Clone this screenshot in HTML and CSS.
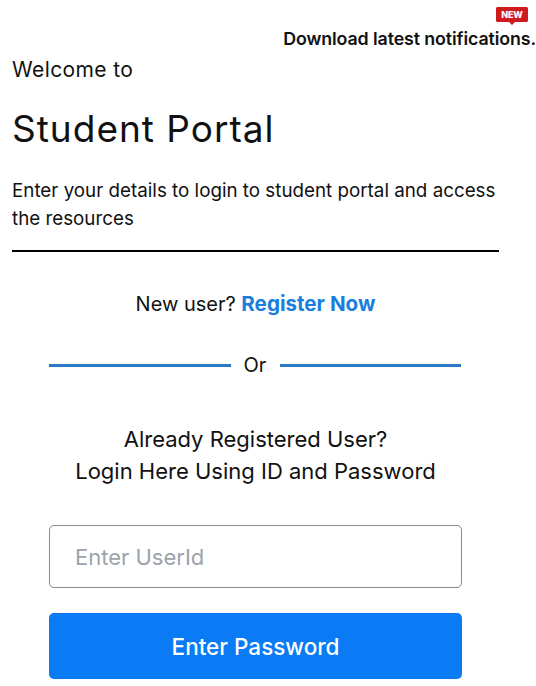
FILE: index.html
```html
<!DOCTYPE html>
<html lang="en">
<head>
<meta charset="utf-8">
<title>Student Portal</title>
<link rel="stylesheet" href="styles.css">
</head>
<body>
<header class="notice">
  <a class="notice-link" href="#">Download latest notifications.
    <svg class="new-badge" width="32" height="18" viewBox="0 0 32 18" aria-hidden="true"><path d="M1.500 0H30.500A1.500 1.500 0 0 1 32 1.500V13.500A1.500 1.500 0 0 1 30.500 15H19L16 18L13 15H1.500A1.500 1.500 0 0 1 0 13.500V1.500A1.500 1.500 0 0 1 1.500 0Z" fill="#cf1a1f"/><text x="16" y="11" text-anchor="middle" class="new-text">NEW</text></svg>
  </a>
</header>
<section class="intro">
  <p class="welcome">Welcome to</p>
  <h1 class="title">Student Portal</h1>
  <p class="lead">Enter your details to login to student portal and access the resources</p>
</section>
<main class="login">
  <p class="register">New user? <a href="#">Register Now</a></p>
  <div class="divider"><span class="divider-line"></span><span class="divider-text">Or</span><span class="divider-line"></span></div>
  <p class="prompt">Already Registered User?<br>Login Here Using ID and Password</p>
  <input class="field" type="text" placeholder="Enter UserId">
  <button class="submit" type="button">Enter Password</button>
</main>
</body>
</html>
```
FILE: styles.css
```css
* { box-sizing: border-box; }
html, body { margin: 0; padding: 0; background: #fff; }
body { font-family: "Inter", "Lato", sans-serif; color: #111; overflow: hidden; height: 686px; }
p, h1 { margin: 0; }
.notice { display: flex; justify-content: flex-end; padding-top: 28px; height: 58px; }
.notice-link { position: relative; top: 1px; color: #111; text-decoration: none; font-size: 17.8px; font-weight: 600; line-height: 20px; letter-spacing: -0.1px; white-space: nowrap; }
.new-badge { position: absolute; right: 8px; top: -22px; }
.new-text { fill: #fff; font: 800 9px "Inter", sans-serif; }
.intro { margin: 0 37px 0 12px; border-bottom: 2px solid #000; height: 194px; }
.welcome { font-size: 21px; line-height: 24px; letter-spacing: 0.4px; }
.title { font-size: 37px; font-weight: 400; line-height: 44px; margin-top: 25px; letter-spacing: 1px; }
.lead { font-size: 18.8px; line-height: 28px; margin-top: 26px; }
.login { display: flex; flex-direction: column; margin: 0 74px 0 49px; }
.register { text-align: center; font-size: 20px; line-height: 24px; margin-top: 40px; }
.register a { color: #1a7fdc; font-size: 20.6px; font-weight: 700; text-decoration: none; }
.divider { display: flex; align-items: center; margin-top: 37px; height: 24px; padding-right: 1px; }
.divider-line { flex: 1; height: 3px; background: #2b78c4; }
.divider-text { width: 49px; text-align: center; font-size: 20px; }
.prompt { text-align: center; font-size: 22px; line-height: 32px; margin-top: 46px; }
.field { height: 63px; margin-top: 38px; border: 1px solid #8a8a8f; border-radius: 5px; padding: 0 25px; font: 400 22px "Inter", sans-serif; outline: none; }
.field::placeholder { color: #9ca3ad; opacity: 1; }
.submit { height: 66px; margin-top: 25px; border: 0; border-radius: 5px; background: #0a7bf5; color: #fff; font: 500 22.5px "Inter", sans-serif; }
```
